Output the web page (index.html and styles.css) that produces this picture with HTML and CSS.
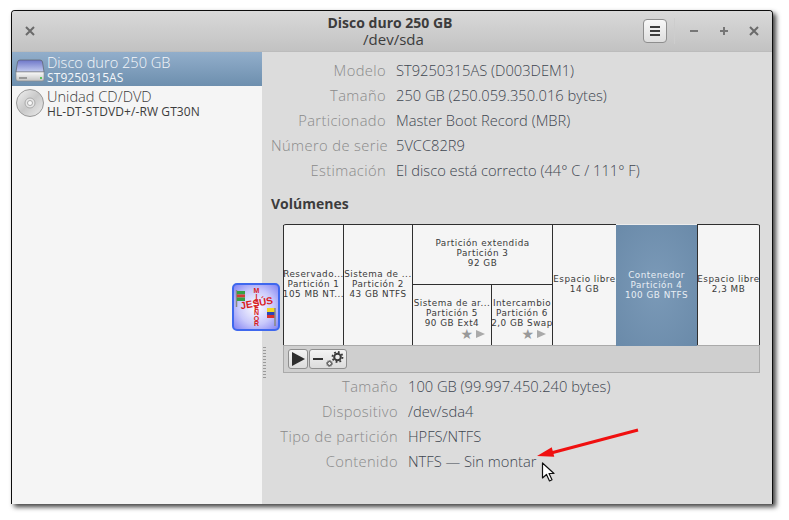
FILE: index.html
```html
<!DOCTYPE html>
<html lang="es">
<head>
<meta charset="utf-8">
<title>Disco duro 250 GB</title>
<link rel="stylesheet" href="styles.css">
</head>
<body>
<div class="window">
  <header class="titlebar">
    <div class="tb-left">
      <button class="wbtn close-left" aria-label="Cerrar"><svg width="10" height="10" viewBox="0 0 10 10"><path d="M1 1l8 8M9 1l-8 8" stroke="#6a6a6a" stroke-width="2"/></svg></button>
    </div>
    <div class="title"><strong>Disco duro 250 GB</strong><span>/dev/sda</span></div>
    <div class="tb-right">
      <button class="menu" aria-label="Menú"><svg width="12" height="12" viewBox="0 0 12 12"><path d="M1 2h10M1 6h10M1 10h10" stroke="#3c3c3c" stroke-width="2"/></svg></button>
      <div class="sep"></div>
      <button class="wbtn" aria-label="Minimizar"><svg width="10" height="10" viewBox="0 0 10 10"><path d="M1 5h8" stroke="#767676" stroke-width="2"/></svg></button>
      <button class="wbtn" aria-label="Maximizar"><svg width="10" height="10" viewBox="0 0 10 10"><path d="M1 5h8M5 1v8" stroke="#767676" stroke-width="2"/></svg></button>
      <button class="wbtn" aria-label="Cerrar"><svg width="10" height="10" viewBox="0 0 10 10"><path d="M1 1l8 8M9 1l-8 8" stroke="#6a6a6a" stroke-width="2"/></svg></button>
    </div>
  </header>
  <div class="main">
    <aside class="sidebar">
      <div class="device selected">
        <svg class="devicon" width="30" height="30" viewBox="0 0 30 30">
          <defs>
            <linearGradient id="hdtop" x1="0" y1="0" x2="0" y2="1"><stop offset="0" stop-color="#6d76c8"/><stop offset="1" stop-color="#c5cdf0"/></linearGradient>
            <linearGradient id="hdfront" x1="0" y1="0" x2="0" y2="1"><stop offset="0" stop-color="#fafafa"/><stop offset="1" stop-color="#c4c4c4"/></linearGradient>
          </defs>
          <path d="M5 6h20q2 0 2.500 2L29 18H1L2.500 8Q3 6 5 6z" fill="url(#hdtop)" stroke="#555" stroke-width=".6"/>
          <path d="M1 18h28v7q0 2-2 2H3q-2 0-2-2z" fill="url(#hdfront)" stroke="#888" stroke-width=".6"/>
          <rect x="4" y="23" width="8" height="2" fill="#999"/><rect x="25" y="23" width="2" height="2" fill="#5cc05c"/>
        </svg>
        <div class="devtext"><div class="devname">Disco duro 250 GB</div><div class="devsub">ST9250315AS</div></div>
      </div>
      <div class="device">
        <svg class="devicon" width="30" height="30" viewBox="0 0 30 30">
          <defs><linearGradient id="cd" x1="0" y1="0" x2="1" y2="1"><stop offset="0" stop-color="#f2f2f2"/><stop offset=".5" stop-color="#c8c8c8"/><stop offset="1" stop-color="#eee"/></linearGradient></defs>
          <circle cx="15" cy="15" r="13.500" fill="url(#cd)" stroke="#999"/>
          <circle cx="15" cy="15" r="5" fill="#e6e6e6" stroke="#aaa"/><circle cx="15" cy="15" r="2.500" fill="#f8f8f8" stroke="#aaa"/>
        </svg>
        <div class="devtext"><div class="devname">Unidad CD/DVD</div><div class="devsub">HL-DT-STDVD+/-RW GT30N</div></div>
      </div>
    </aside>
    <div class="grip"></div>
    <section class="content">
      <dl class="props top">
        <dt>Modelo</dt><dd>ST9250315AS (D003DEM1)</dd>
        <dt>Tamaño</dt><dd>250 GB (250.059.350.016 bytes)</dd>
        <dt>Particionado</dt><dd>Master Boot Record (MBR)</dd>
        <dt>Número de serie</dt><dd>5VCC82R9</dd>
        <dt>Estimación</dt><dd>El disco está correcto (44° C / 111° F)</dd>
      </dl>
      <h2 class="heading">Volúmenes</h2>
      <div class="disk">
        <div class="bar">
          <div class="part w60"><p>Reservado...</p><p>Partición 1</p><p>105 MB NT...</p></div>
          <div class="part w69"><p>Sistema de ...</p><p>Partición 2</p><p>43 GB NTFS</p></div>
          <div class="ext">
            <div class="ext-head"><p>Partición extendida</p><p>Partición 3</p><p>92 GB</p></div>
            <div class="ext-body">
              <div class="part sub w78"><p>Sistema de ar...</p><p>Partición 5</p><p>90 GB Ext4</p><div class="marks"><span class="star">★</span><span class="tri"></span></div></div>
              <div class="part sub grow"><p>Intercambio</p><p>Partición 6</p><p>2,0 GB Swap</p><div class="marks"><span class="star">★</span><span class="tri"></span></div></div>
            </div>
          </div>
          <div class="part w64"><p>Espacio libre</p><p>14 GB</p></div>
          <div class="part sel w81"><p>Contenedor</p><p>Partición 4</p><p>100 GB NTFS</p></div>
          <div class="part last grow"><p>Espacio libre</p><p>2,3 MB</p></div>
        </div>
        <div class="tools">
          <button class="tool play" aria-label="Montar"><svg width="18" height="18" viewBox="0 0 18 18"><path d="M3 2l13 7-13 7z" fill="#2e2e2e"/></svg></button>
          <div class="toolgroup">
            <svg width="14" height="18" viewBox="0 0 14 18"><path d="M2 9h10" stroke="#333" stroke-width="2"/></svg>
            <svg width="20" height="18" viewBox="0 0 20 18"><g fill="none" stroke="#3a3a3a"><circle cx="12.500" cy="7" r="3.300" stroke-width="2"/><circle cx="12.500" cy="7" r="5" stroke-width="1.800" stroke-dasharray="1.800 2.100"/><circle cx="4.500" cy="13.500" r="2" stroke-width="1"/><circle cx="4.500" cy="13.500" r="3" stroke-width="1" stroke-dasharray="1 1.300"/></g></svg>
          </div>
        </div>
      </div>
      <dl class="props bottom">
        <dt>Tamaño</dt><dd>100 GB (99.997.450.240 bytes)</dd>
        <dt>Dispositivo</dt><dd>/dev/sda4</dd>
        <dt>Tipo de partición</dt><dd>HPFS/NTFS</dd>
        <dt>Contenido</dt><dd>NTFS — Sin montar</dd>
      </dl>
    </section>
  </div>
</div>

<div class="badge">
  <svg width="48" height="48" viewBox="0 0 48 48">
    <defs><radialGradient id="bg" cx=".5" cy=".5" r=".7"><stop offset="0" stop-color="#ffffff"/><stop offset=".55" stop-color="#c8c8fb"/><stop offset="1" stop-color="#7d7df2"/></radialGradient></defs>
    <rect x="1" y="1" width="46" height="46" rx="4" fill="url(#bg)" stroke="#3f68ee" stroke-width="2"/>
    <path d="M4.500 7v17" stroke="#8a8a80" stroke-width="1.500"/>
    <rect x="5" y="8" width="8" height="3.500" fill="#35a043"/><rect x="5" y="11.500" width="8" height="3" fill="#d63a35"/><rect x="5" y="14.500" width="8" height="3.500" fill="#35a043"/>
    <rect x="35" y="25" width="8" height="4" fill="#f0d820"/><rect x="35" y="29" width="8" height="3" fill="#2a45b5"/><rect x="35" y="32" width="8" height="3" fill="#d9302c"/>
    <path d="M43 25v18" stroke="#8a8a80" stroke-width="1.500"/>
    <text class="b-h" x="24.500" y="23.500" text-anchor="middle" transform="rotate(-10 24.500 19)">JESÚS</text>
    <text class="b-v" x="24.500 24.500 24.500 24.500 24.500 24.500 24.500" y="10 15.500 21 26.500 32 37.500 43">MISEÑOR</text>
  </svg>
</div>
<svg class="arrow" width="110" height="45" viewBox="0 0 110 45"><path d="M107 3L20 26" stroke="#f01010" stroke-width="3"/><path d="M6 29L20.750 20.150 23.250 29.850z" fill="#f01010"/></svg>
<svg class="cursor" width="16" height="22" viewBox="0 0 16 22"><path d="M1.500 1v15l4-3.500 3 6.500 2.500-1.200-3-6.300h5z" fill="#fff" stroke="#111" stroke-width="1.200" stroke-linejoin="round"/></svg>
</body>
</html>
```
FILE: styles.css
```css
* { box-sizing: border-box; }
html, body { margin: 0; height: 100%; }
body {
  position: relative;
  width: 789px;
  height: 520px;
  overflow: hidden;
  background: #fff;
  padding: 10px 0 0 11px;
  font-family: "Open Sans", "Noto Sans", sans-serif;
  color: #3c3c3c;
}
.window {
  width: 762px;
  height: 494px;
  border: 1px solid #0c0c0c;
  border-bottom: 0;
  border-radius: 4px 4px 0 0;
  box-shadow: 3px 3px 5px rgba(0,0,0,.75);
  display: flex;
  flex-direction: column;
  background: #dcdcdc;
  overflow: hidden;
}
.titlebar {
  height: 41px;
  flex: none;
  display: grid;
  grid-template-columns: 1fr auto 1fr;
  align-items: center;
  background: linear-gradient(#d9d9d9, #c2c2c2);
  border-bottom: 1px solid #bcbcbc;
  padding: 0 3px 0 13px;
}
.tb-left { display: flex; }
.tb-right { display: flex; align-items: center; justify-content: flex-end; }
.wbtn {
  width: 30px; height: 24px; padding: 0; border: 0; background: none;
  display: flex; align-items: center; justify-content: center;
}
.close-left { width: 10px; }
.title {
  display: flex; flex-direction: column; align-items: center;
  color: #3c3c3c;
  line-height: 17px;
  margin-left: -14px;
  margin-top: -1px;
}
.title strong { font-weight: 700; font-size: 14px; }
.title span { font-weight: 400; font-size: 15px; padding-left: 7px; }
.menu {
  width: 24px; height: 24px; padding: 0; margin-right: 7px;
  border: 1px solid #8e8e8e; border-radius: 4px;
  background: linear-gradient(#f8f8f8, #dedede);
  display: flex; align-items: center; justify-content: center;
}
.sep { width: 1px; height: 26px; background: #cdcdcd; margin-right: 4px; }
.main { flex: 1; display: flex; min-height: 0; }
.sidebar { width: 250px; flex: none; background: #f5f5f5; }
.device {
  height: 34px;
  display: flex; align-items: center;
  padding-left: 3px; gap: 2px;
  color: #3c3c3c;
}
.device.selected { background: linear-gradient(#92aecb, #6d8fae); color: #f4f7fa; }
.devicon { flex: none; }
.devtext { padding-top: 1px; }
.devname { font-size: 14.600px; line-height: 16px; font-weight: 300; }
.devsub { font-size: 12px; line-height: 15px; font-weight: 400; letter-spacing: .1px; }
.grip {
  width: 9px;
  flex: none;
  position: relative;
}
.grip::after {
  content: "";
  position: absolute;
  left: 1px; top: 295px;
  width: 3px; height: 31px;
  background: repeating-linear-gradient(#9a9a9a 0 1px, transparent 1px 3px);
}
.content { flex: 1; min-width: 0; padding-top: 6px; }
.props {
  display: grid;
  margin: 0;
  font-size: 14.700px;
  line-height: 25px;
  font-weight: 300;
}
.props dt { text-align: right; color: #8a8a8a; letter-spacing: .4px; white-space: nowrap; }
.props dd { margin: 0; color: #3e4650; }
.top { grid-template-columns: 115px 1fr; column-gap: 10px; }
.heading {
  margin: 11px 0 10px 0;
  font-size: 14px; line-height: 20px; font-weight: 700; color: #3c3c3c;
}
.disk {
  margin-left: 12px;
  width: 477px;
}
.bar {
  height: 121px;
  display: flex;
  background: #f5f5f5;
  border-top: 1px solid #2f2f2f;
  border-radius: 3px 3px 0 0;
  font-family: "DejaVu Sans", sans-serif;
  font-size: 8.800px;
  line-height: 10px;
  letter-spacing: .5px;
  color: #3a3a3a;
  text-align: center;
}
.bar p { margin: 0; white-space: nowrap; }
.part {
  position: relative;
  border-left: 1px solid #2f2f2f;
  display: flex; flex-direction: column; justify-content: center; align-items: center;
  padding-bottom: 2px;
  flex: none;
  min-width: 0;
}
.part.last { border-right: 1px solid #2f2f2f; }
.grow { flex: 1; }
.w60 { width: 60px; }
.w69 { width: 69px; }
.w78 { width: 78px; border-left: 0; }
.w64 { width: 64px; }
.w81 { width: 81px; }
.sel {
  background: radial-gradient(ellipse at center, #7b9ab8, #6a8aa9);
  color: #e8eef4;
  border-left: 0;
  margin-top: -1px;
  border-top: 1px solid #ececec;
  height: 122px;
}
.ext {
  width: 140px; flex: none;
  border-left: 1px solid #2f2f2f;
  display: flex; flex-direction: column;
}
.ext-head {
  height: 60px;
  border-bottom: 1px solid #2f2f2f;
  padding-top: 13px;
  flex: none;
}
.ext-body { flex: 1; display: flex; min-height: 0; }
.part.sub { justify-content: flex-start; padding-top: 13px; padding-bottom: 0; }
.part.sub.grow { border-left: 1px solid #2f2f2f; }
.marks {
  position: absolute; right: 6px; bottom: 6px;
  display: flex; align-items: center; gap: 3px;
  letter-spacing: 0;
}
.star { font-size: 14px; line-height: 10px; color: #999; }
.tri {
  width: 0; height: 0;
  border-left: 9px solid #aaa;
  border-top: 4.500px solid transparent;
  border-bottom: 4.500px solid transparent;
}
.tools {
  height: 28px;
  background: #cfcfcf;
  border: 1px solid #aaa;
  display: flex; align-items: center;
  padding-left: 4px; gap: 1px;
}
.tool, .toolgroup {
  height: 20px;
  border: 1px solid #8e8e8e;
  border-radius: 3px;
  background: linear-gradient(#f4f4f4, #dcdcdc);
  display: flex; align-items: center; justify-content: center;
  padding: 0;
}
.tool { width: 20px; }
.toolgroup { width: 38px; }
.bottom {
  grid-template-columns: 127px 1fr;
  column-gap: 10px;
  margin-top: 1px;
}
.badge { position: absolute; left: 232px; top: 283px; width: 48px; height: 48px; line-height: 0; }
.b-h { font: 700 10px "Liberation Sans", sans-serif; fill: #d8201c; }
.b-v {
  font: 700 7px "Liberation Sans", sans-serif;
  fill: #d8201c;
  text-anchor: middle;
}
.arrow { position: absolute; left: 531px; top: 427px; }
.cursor { position: absolute; left: 541px; top: 462px; }
```
